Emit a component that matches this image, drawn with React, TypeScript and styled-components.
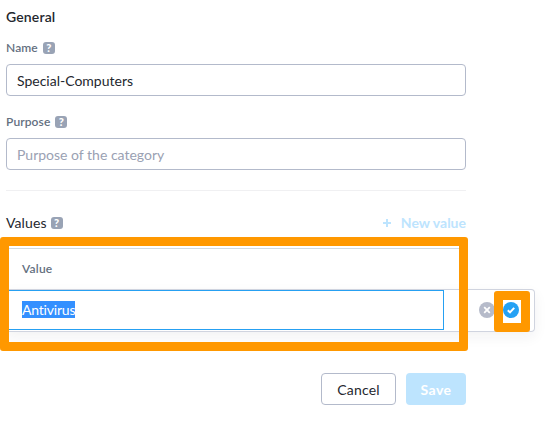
import React from 'react';
import styled, { createGlobalStyle } from 'styled-components';

const GlobalStyle = createGlobalStyle`
  *, *::before, *::after { box-sizing: border-box; }
  body {
    margin: 0;
    background: #fff;
    color: #24272e;
    font-family: Lato, "Open Sans", sans-serif;
    font-size: 14px;
    overflow: hidden;
  }
`;

const Page = styled.main`
  position: relative;
  width: 547px;
  height: 422px;
  padding: 8px 0 0 6px;
  display: flex;
  flex-direction: column;
`;

const Heading = styled.h1`
  margin: 0;
  height: 18px;
  font-size: 14px;
  line-height: 18px;
  font-weight: 600;
  letter-spacing: 0.15px;
`;

const Field = styled.div<{ $gap: number }>`
  width: 460px;
  margin-top: ${p => p.$gap}px;
`;

const Label = styled.label`
  display: flex;
  align-items: center;
  gap: 5px;
  height: 16px;
  font-size: 12px;
  font-weight: 600;
  line-height: 16px;
  letter-spacing: 0.1px;
  color: #64707f;
`;

const Input = styled.input`
  display: block;
  width: 460px;
  height: 32px;
  margin-top: 8px;
  padding: 1px 10px 0;
  border: 1px solid #b3bacb;
  border-radius: 4px;
  outline: none;
  background: #fff;
  color: #24272e;
  font: inherit;
  &::placeholder { color: #9aa1b3; opacity: 1; }
`;

const Help = styled.span`
  display: flex;
  align-items: center;
  justify-content: center;
  width: 12px;
  height: 12px;
  border-radius: 3px;
  background: #99a3b5;
  color: #fff;
  font: 900 11px/12px Lato, sans-serif;
  letter-spacing: 0;
`;

const Divider = styled.hr`
  width: 460px;
  height: 1px;
  margin: 20px 0 0;
  border: 0;
  background: #f0f0f2;
`;

const ValuesBar = styled.div`
  display: flex;
  align-items: center;
  justify-content: space-between;
  width: 460px;
  height: 18px;
  margin-top: 23px;
`;

const ValuesTitle = styled.div`
  display: flex;
  align-items: center;
  gap: 4px;
  line-height: 16px;
  padding-bottom: 1px;
  letter-spacing: 0.1px;
  ${Help} { margin-top: 1px; }
`;

const AddButton = styled.button`
  display: flex;
  align-items: center;
  gap: 10px;
  padding: 0;
  border: 0;
  background: none;
  color: #bde4fe;
  font: 700 14px/18px Lato, sans-serif;
`;

const Table = styled.section`
  width: 541px;
  margin-top: 16px;
`;

const TableHead = styled.div`
  width: 460px;
  height: 41px;
  padding: 0 16px;
  border-top: 1px solid #d3d9e0;
  font-size: 12px;
  line-height: 39px;
  font-weight: 600;
  letter-spacing: 0.2px;
  color: #64707f;
`;

const EditRow = styled.div`
  display: flex;
  width: 529px;
  height: 43px;
  border: 1px solid #d0d4df;
  border-left: 0;
  border-radius: 0 4px 4px 0;
  box-shadow: 0 5px 14px rgba(30, 35, 50, 0.06);
`;

const EditCell = styled.div`
  display: flex;
  align-items: flex-start;
  width: 438px;
  height: 40px;
  padding: 10px 0 0 16px;
  border: 1px solid #26a0f2;
  border-left: 0;
`;

const Selected = styled.span`
  width: 53px;
  height: 17px;
  line-height: 18px;
  background: #3390ff;
  color: #fff;
  letter-spacing: -0.2px;
`;

const RowActions = styled.div`
  display: flex;
  gap: 8px;
  padding: 12px 0 0 35px;
  svg { display: block; }
`;

const Footer = styled.footer`
  display: flex;
  justify-content: flex-end;
  gap: 10px;
  width: 460px;
  margin-top: 41px;
`;

const Button = styled.button<{ $primary?: boolean }>`
  width: ${p => (p.$primary ? 60 : 75)}px;
  height: 32px;
  padding: 1px 0 0;
  border: ${p => (p.$primary ? '0' : '1px solid #b3bacb')};
  border-radius: 4px;
  background: ${p => (p.$primary ? '#bde4fe' : '#fff')};
  color: ${p => (p.$primary ? '#fff' : '#24272e')};
  font: ${p => (p.$primary ? 700 : 400)} 14px/18px Lato, sans-serif;
  letter-spacing: ${p => (p.$primary ? 0.45 : 0.2)}px;
`;

const Callout = styled.div<{ $x: number; $y: number; $w: number; $h: number }>`
  position: absolute;
  left: ${p => p.$x}px;
  top: ${p => p.$y}px;
  width: ${p => p.$w}px;
  height: ${p => p.$h}px;
  border: 9px solid #ff9800;
  border-radius: 3px;
  pointer-events: none;
`;

export default function App() {
  return (
    <>
      <GlobalStyle />
      <Page>
        <Heading>General</Heading>
        <Field $gap={14}>
          <Label>Name <Help>?</Help></Label>
          <Input defaultValue="Special-Computers" />
        </Field>
        <Field $gap={18}>
          <Label>Purpose <Help>?</Help></Label>
          <Input placeholder="Purpose of the category" />
        </Field>
        <Divider />
        <ValuesBar>
          <ValuesTitle>Values <Help>?</Help></ValuesTitle>
          <AddButton>
            <svg width="8" height="8" viewBox="0 0 8 8" stroke="#bde4fe" strokeWidth="2"><path d="M4 0v8M0 4h8" /></svg>
            New value
          </AddButton>
        </ValuesBar>
        <Table>
          <TableHead>Value</TableHead>
          <EditRow>
            <EditCell><Selected>Antivirus</Selected></EditCell>
            <RowActions>
              <svg width="16" height="16" viewBox="0 0 16 16"><circle cx="8" cy="8" r="8" fill="#b6bbca" /><path d="M5.2 5.2l5.6 5.6M10.8 5.2l-5.6 5.6" stroke="#fff" strokeWidth="1.8" /></svg>
              <svg width="16" height="16" viewBox="0 0 16 16"><circle cx="8" cy="8" r="8" fill="#25a1f4" /><path d="M4.8 8.3l2.2 2.1 4.200-4.600" fill="none" stroke="#fff" strokeWidth="2" /></svg>
            </RowActions>
          </EditRow>
        </Table>
        <Footer>
          <Button>Cancel</Button>
          <Button $primary>Save</Button>
        </Footer>
        <Callout $x={0} $y={237} $w={468} $h={114} />
        <Callout $x={494} $y={291} $w={36} $h={41} />
      </Page>
    </>
  );
}
